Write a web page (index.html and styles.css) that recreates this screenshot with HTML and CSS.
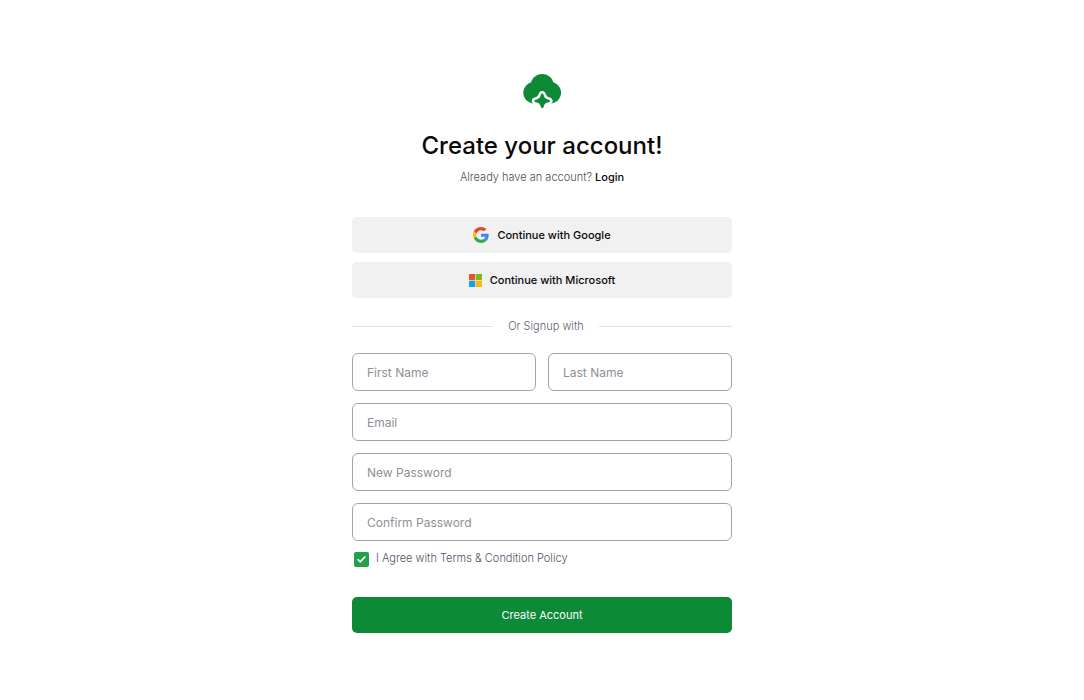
FILE: index.html
```html
<!DOCTYPE html>
<html lang="en">
<head>
  <meta charset="UTF-8">
  <meta name="viewport" content="width=device-width, initial-scale=1.0">
  <title>Create your account</title>
  <link rel="stylesheet" href="styles.css">
</head>
<body>

<main class="signup">
  <svg class="logo" viewBox="0 0 38 35" aria-hidden="true">
    <g fill="#0c8a35">
      <circle cx="19.2" cy="12.5" r="11.5"/>
      <circle cx="11" cy="19.8" r="10.7"/>
      <circle cx="27.4" cy="19.8" r="10.7"/>
    </g>
    <path fill="#0c8a35" stroke="#fff" stroke-width="5" stroke-linejoin="round" paint-order="stroke" d="M19.2 20.4C20 20.4 20.3 21 20.7 22.2C21.6 24.8 22.2 25.6 24.8 26.4C26.4 26.9 27.2 27.2 27.2 27.9C27.2 28.6 26.4 28.9 24.8 29.4C22.2 30.2 21.5 30.9 20.7 33.4C20.3 34.6 20 35 19.2 35C18.4 35 18.1 34.6 17.7 33.4C16.9 30.9 16.2 30.2 13.6 29.4C12 28.9 11.2 28.6 11.2 27.9C11.2 27.2 12 26.9 13.6 26.4C16.2 25.6 16.8 24.8 17.7 22.2C18.1 21 18.4 20.4 19.2 20.4Z"/>
  </svg>

  <h1>Create your account!</h1>
  <p class="login-hint">Already have an account? <a href="#login">Login</a></p>

  <div class="social">
    <button type="button" class="social-btn">
      <svg class="google-icon" viewBox="0 0 48 48" aria-hidden="true">
        <path fill="#ea4335" d="M24 9.5c3.54 0 6.71 1.22 9.21 3.6l6.85-6.85C35.9 2.38 30.47 0 24 0 14.62 0 6.51 5.38 2.56 13.22l7.98 6.19C12.43 13.72 17.74 9.5 24 9.5z"/>
        <path fill="#4285f4" d="M46.98 24.55c0-1.57-.15-3.09-.38-4.55H24v9.02h12.94c-.58 2.96-2.26 5.48-4.78 7.18l7.73 6c4.51-4.18 7.09-10.36 7.09-17.65z"/>
        <path fill="#fbbc05" d="M10.53 28.59c-.48-1.45-.76-2.99-.76-4.59s.27-3.14.76-4.59l-7.98-6.19C.92 16.46 0 20.12 0 24c0 3.88.92 7.54 2.56 10.78l7.97-6.19z"/>
        <path fill="#34a853" d="M24 48c6.48 0 11.93-2.13 15.89-5.81l-7.73-6c-2.15 1.45-4.92 2.3-8.16 2.3-6.26 0-11.57-4.22-13.47-9.91l-7.98 6.19C6.51 42.62 14.62 48 24 48z"/>
      </svg>
      Continue with Google
    </button>
    <button type="button" class="social-btn">
      <svg class="microsoft-icon" viewBox="0 0 21 21" aria-hidden="true">
        <path fill="#e8532b" d="M0 0h10v10H0z"/>
        <path fill="#84b817" d="M11 0h10v10H11z"/>
        <path fill="#12a3ea" d="M0 11h10v10H0z"/>
        <path fill="#fcb813" d="M11 11h10v10H11z"/>
      </svg>
      Continue with Microsoft
    </button>
  </div>

  <div class="divider">Or Signup with</div>

  <form class="signup-form">
    <div class="name-row">
      <input type="text" class="field" placeholder="First Name" aria-label="First Name">
      <input type="text" class="field" placeholder="Last Name" aria-label="Last Name">
    </div>
    <input type="email" class="field" placeholder="Email" aria-label="Email">
    <input type="password" class="field" placeholder="New Password" aria-label="New Password">
    <input type="password" class="field" placeholder="Confirm Password" aria-label="Confirm Password">

    <div class="agree">
      <input type="checkbox" id="agree" checked>
      <label for="agree">I Agree with Terms &amp; Condition Policy</label>
    </div>

    <button type="submit" class="submit-btn">Create Account</button>
  </form>
</main>

</body>
</html>
```

FILE: styles.css
```css
* {
  box-sizing: border-box;
}
body {
  margin: 0;
  background: #fff;
  color: #0a0a0a;
  font-family: Inter, sans-serif;
  font-size: 11px;
}
button,
input {
  font-family: inherit;
}
.signup {
  display: flex;
  flex-direction: column;
  width: 100%;
  max-width: 420px;
  margin: 0 auto;
  padding: 73px 20px 64px;
}
.logo {
  width: 38px;
  height: 35px;
  align-self: center;
}
h1 {
  margin: 20px 0 0;
  font-size: 24px;
  font-weight: 500;
  line-height: 36px;
  text-align: center;
}
.login-hint {
  margin: 5px 0 0;
  color: #4b4f54;
  font-weight: 300;
  line-height: 16px;
  text-align: center;
}
.login-hint a {
  color: #0a0a0a;
  font-weight: 500;
  text-decoration: none;
}
.social {
  display: flex;
  flex-direction: column;
  gap: 9px;
  margin-top: 32px;
}
.social-btn {
  display: flex;
  align-items: center;
  justify-content: center;
  height: 36px;
  padding: 0;
  border: 0;
  border-radius: 5px;
  background: #f1f1f1;
  color: #0a0a0a;
  font-size: 11px;
  font-weight: 500;
  cursor: pointer;
}
.google-icon {
  width: 16px;
  height: 16px;
  margin-right: 8px;
}
.microsoft-icon {
  width: 13px;
  height: 13px;
  margin-right: 8px;
}
.divider {
  display: flex;
  align-items: center;
  gap: 15px;
  margin: 20px 0 19px;
  color: #5b626e;
  font-weight: 300;
  line-height: 16px;
}
.divider::before,
.divider::after {
  content: "";
  flex: 18;
  height: 1px;
  background: #e0e1e4;
}
.divider::after {
  flex: 17;
}
.signup-form {
  display: flex;
  flex-direction: column;
  gap: 12px;
}
.name-row {
  display: flex;
  gap: 12px;
}
.field {
  width: 100%;
  min-width: 0;
  height: 38px;
  padding: 0 14px;
  border: 1px solid #a3a3a3;
  border-radius: 6px;
  background: #fff;
  color: #0a0a0a;
  font-size: 12px;
}
.field::placeholder {
  color: #8e9196;
}
.agree {
  display: flex;
  gap: 7px;
  margin-top: -1px;
  padding-left: 2px;
  color: #4f5465;
  font-weight: 300;
  line-height: 12px;
}
.agree input {
  display: grid;
  place-content: center;
  width: 15px;
  height: 15px;
  margin: 0;
  appearance: none;
  border-radius: 2px;
  background: #22a04b;
}
.agree input:checked::before {
  content: "";
  width: 9px;
  height: 7px;
  background: #fff;
  clip-path: polygon(0 55%, 14% 38%, 36% 64%, 86% 0, 100% 16%, 37% 100%);
}
.submit-btn {
  height: 36px;
  margin-top: 18px;
  border: 0;
  border-radius: 5px;
  background: #0c8a35;
  color: #fff;
  font-size: 11px;
  font-weight: 400;
  cursor: pointer;
}
```
